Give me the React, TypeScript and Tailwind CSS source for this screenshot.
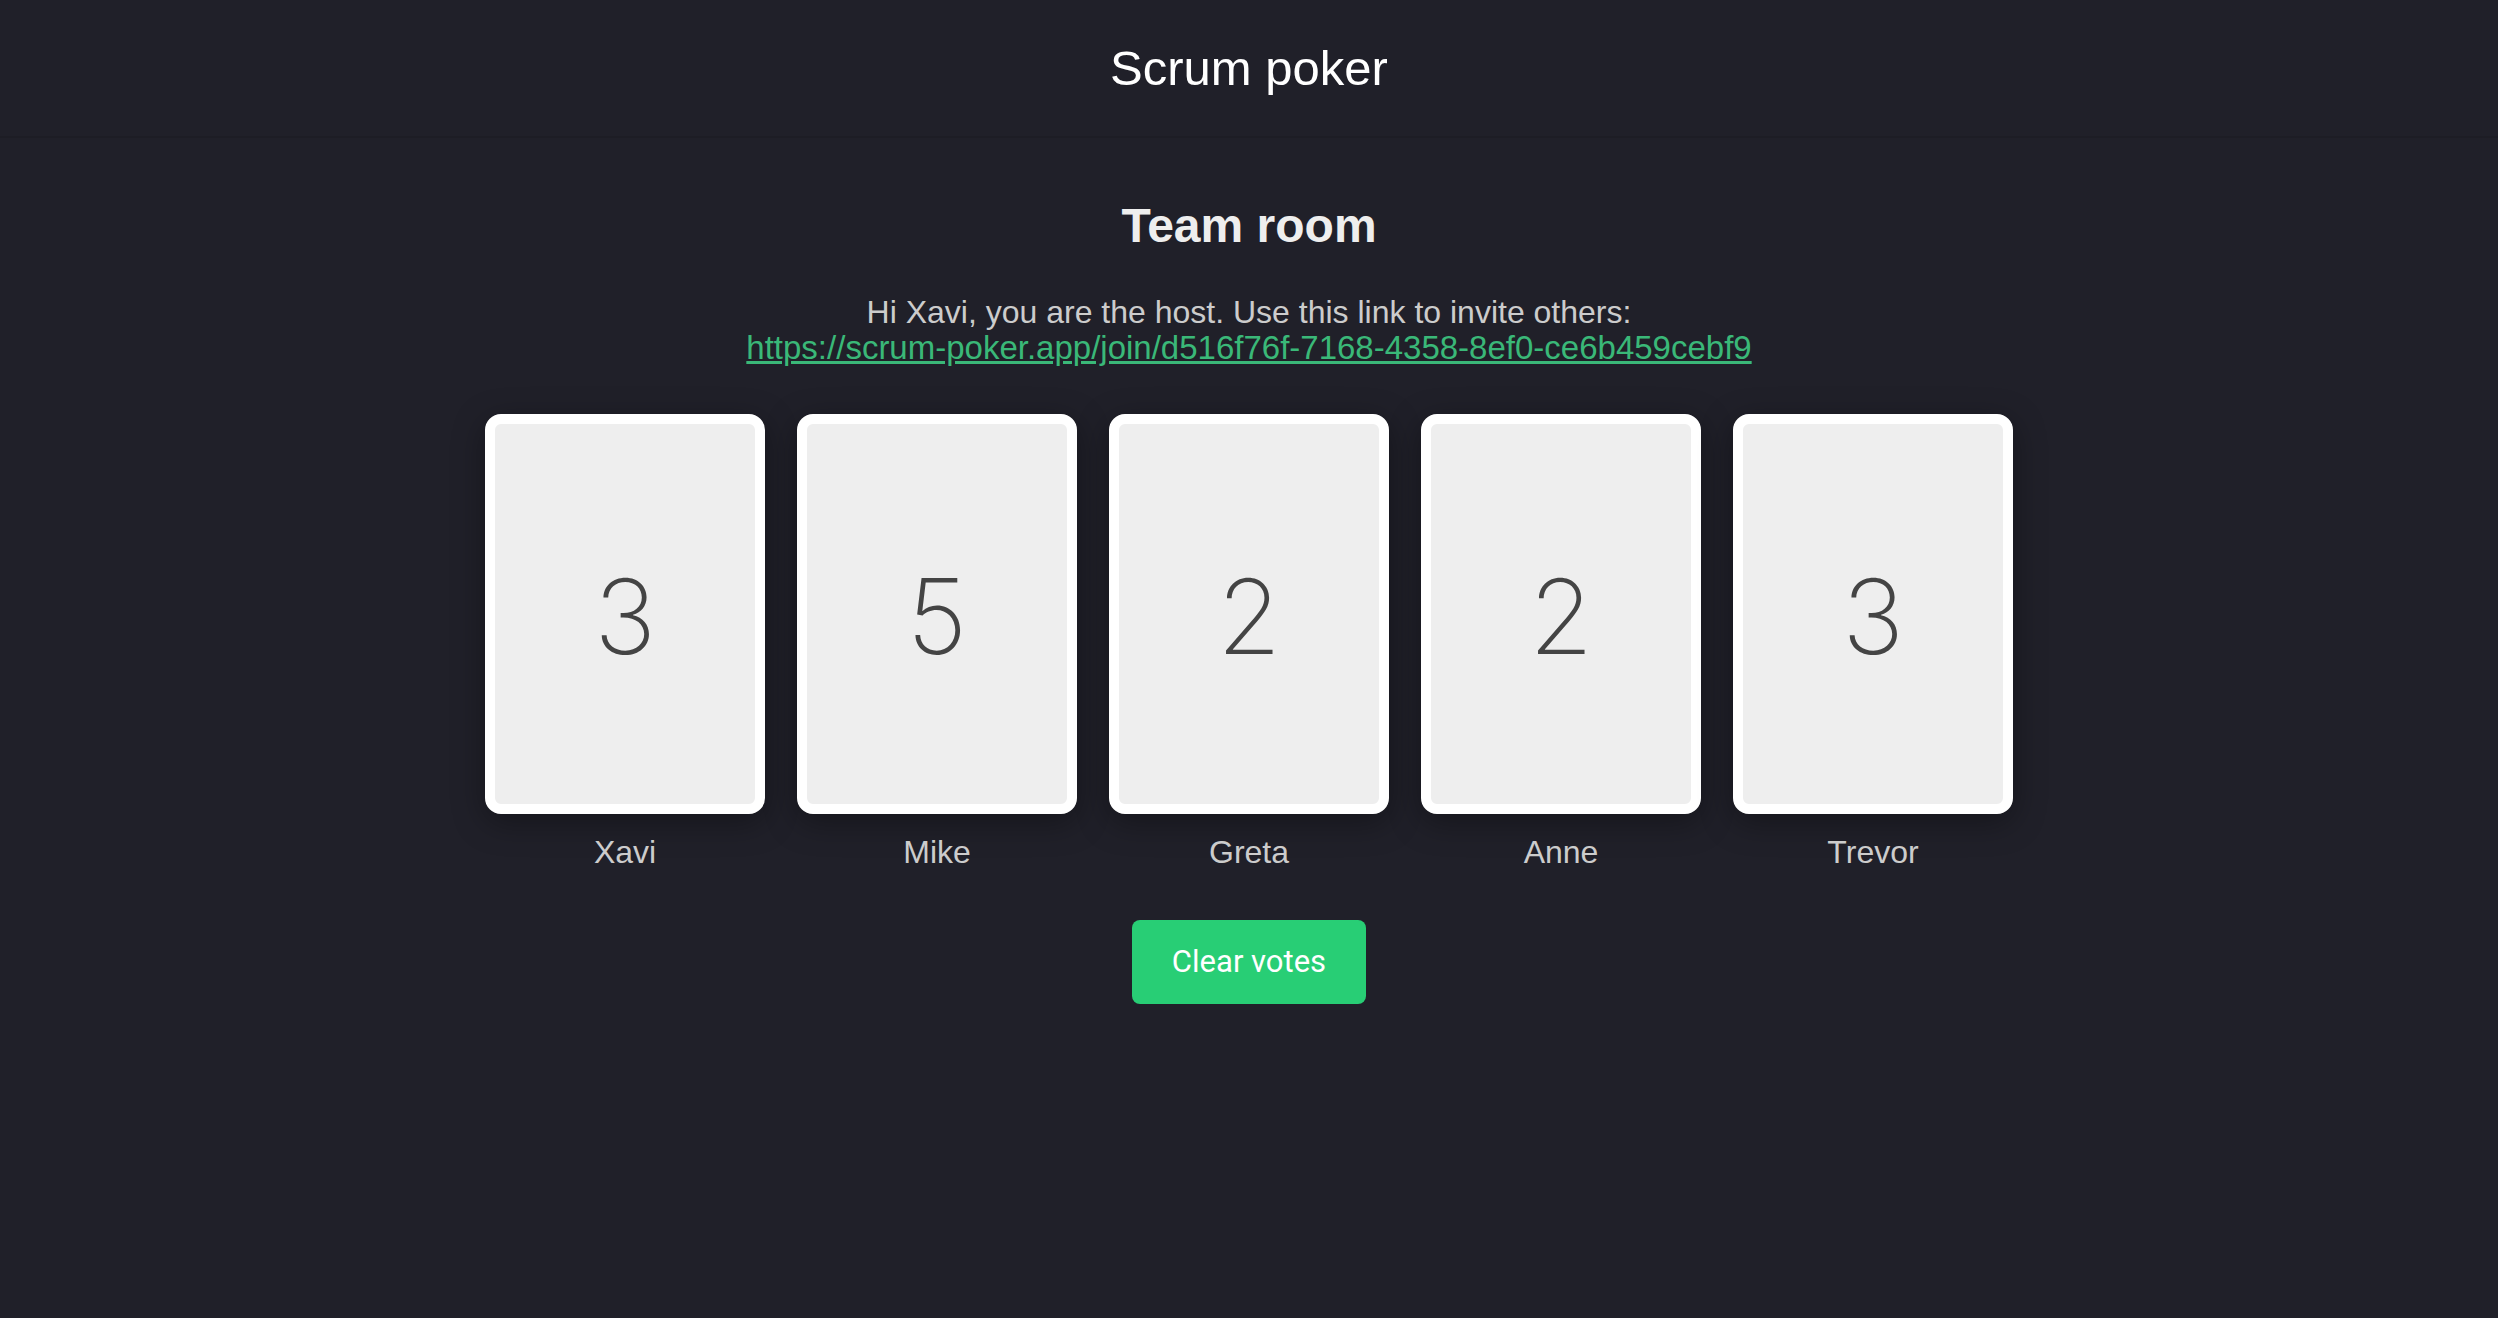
const players = [
  { name: "Xavi", vote: 3 },
  { name: "Mike", vote: 5 },
  { name: "Greta", vote: 2 },
  { name: "Anne", vote: 2 },
  { name: "Trevor", vote: 3 },
];

export default function App() {
  return (
    <div className="min-h-screen bg-[#202029] font-['Liberation_Sans',Arial,sans-serif] text-[32px] leading-[36px] text-[#cccccc]">
      <header className="border-b-2 border-[#1d1d25] py-11 text-center">
        <h1 className="text-[49px] leading-[48px] text-white">Scrum poker</h1>
      </header>
      <main className="flex flex-col items-center pt-14">
        <h2 className="text-[48px] leading-[64px] font-bold text-[#eeeeee]">Team room</h2>
        <p className="mt-9 text-center">
          Hi Xavi, you are the host. Use this link to invite others:
          <br />
          <a
            href="https://scrum-poker.app/join/d516f76f-7168-4358-8ef0-ce6b459cebf9"
            className="text-[33px] text-[#3ab878] underline"
          >
            https://scrum-poker.app/join/d516f76f-7168-4358-8ef0-ce6b459cebf9
          </a>
        </p>
        <ul className="mt-12 flex flex-wrap justify-center gap-8">
          {players.map((p) => (
            <li key={p.name} className="flex flex-col items-center gap-5">
              <div className="flex h-[400px] w-[280px] items-center justify-center rounded-2xl border-10 border-white bg-[#eeeeee] pt-1 font-['Inter','Liberation_Sans',sans-serif] text-[104px] font-extralight text-[#444444] shadow-[0_8px_32px_rgba(0,0,0,0.35)]">
                {p.vote}
              </div>
              <span>{p.name}</span>
            </li>
          ))}
        </ul>
        <button
          type="button"
          className="mt-[50px] rounded-lg bg-[#28ce75] px-10 py-6 font-['Roboto','Liberation_Sans',sans-serif] text-[31px] text-white"
        >
          Clear votes
        </button>
      </main>
    </div>
  );
}
